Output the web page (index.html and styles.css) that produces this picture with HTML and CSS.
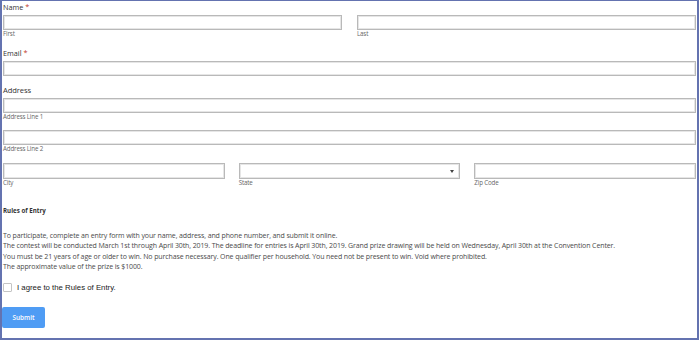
FILE: index.html
```html
<!DOCTYPE html>
<html lang="en">

<head>
    <meta charset="UTF-8">
    <meta name="viewport" content="width=device-width, initial-scale=1.0">
    <title>Contest Entry</title>
    <link rel="stylesheet" href="styles.css">
</head>

<body>
    <main class="frame">
        <form class="entry-form">
            <div class="field name-field">
                <label class="label">Name <span class="req">*</span></label>
                <div class="cols two">
                    <div class="sub">
                        <input type="text" class="input">
                        <span class="hint">First</span>
                    </div>
                    <div class="sub">
                        <input type="text" class="input">
                        <span class="hint">Last</span>
                    </div>
                </div>
            </div>

            <div class="field email-field">
                <label class="label">Email <span class="req">*</span></label>
                <input type="text" class="input">
            </div>

            <div class="field address-field">
                <label class="label big">Address</label>
                <input type="text" class="input">
                <span class="hint">Address Line 1</span>
                <input type="text" class="input line2">
                <span class="hint">Address Line 2</span>
                <div class="cols three">
                    <div class="sub">
                        <input type="text" class="input tall">
                        <span class="hint">City</span>
                    </div>
                    <div class="sub">
                        <div class="select-box input tall"><span class="arrow"></span></div>
                        <span class="hint">State</span>
                    </div>
                    <div class="sub">
                        <input type="text" class="input tall">
                        <span class="hint">Zip Code</span>
                    </div>
                </div>
            </div>

            <div class="rules">
                <h3 class="rules-title">Rules of Entry</h3>
                <p class="rules-text">
                    To participate, complete an entry form with your name, address, and phone number, and submit it online.<br>
                    The contest will be conducted March 1st through April 30th, 2019. The deadline for entries is April 30th, 2019. Grand prize drawing will be held on Wednesday, April 30th at the Convention Center.<br>
                    You must be 21 years of age or older to win. No purchase necessary. One qualifier per household. You need not be present to win. Void where prohibited.<br>
                    The approximate value of the prize is $1000.
                </p>
            </div>

            <label class="agree">
                <span class="box"></span>
                I agree to the Rules of Entry.
            </label>

            <button type="button" class="submit">Submit</button>
        </form>
    </main>
</body>

</html>
```

FILE: styles.css
```css
* {
    margin: 0;
    padding: 0;
    box-sizing: border-box;
    font-family: 'Open Sans', 'Liberation Sans', sans-serif;
}

:root {
    --frame-color: #6473b0;
    --input-border: #b9b9b9;
    --text: #333;
}

body {
    background-color: #fff;
}

.frame {
    width: 699px;
    height: 340px;
    border-top: 1px solid var(--frame-color);
    border-left: 2px solid var(--frame-color);
    border-right: 2px solid var(--frame-color);
    border-bottom: 2px solid var(--frame-color);
    overflow: hidden;
}

.entry-form {
    display: flex;
    flex-direction: column;
    padding: 1px 1px 0 1px;
}

.field {
    display: flex;
    flex-direction: column;
}

.label {
    font-size: 7.3px;
    line-height: 10px;
    height: 10px;
    color: var(--text);
}

.label.big {
    font-size: 7.6px;
    letter-spacing: -0.1px;
}

.req {
    color: #c0392b;
}

.input {
    display: block;
    width: 100%;
    height: 15px;
    border: 1px solid var(--input-border);
    box-shadow: inset 0 0 0 1px #e6e6e6;
    background-color: #fff;
    margin-top: 3px;
}

.input.tall {
    height: 16px;
    margin-top: 0;
}

.input.line2 {
    margin-top: 9px;
}

.hint {
    display: block;
    font-size: 6.2px;
    letter-spacing: -0.15px;
    line-height: 8px;
    height: 8px;
    color: #666;
}

.cols {
    display: grid;
}

.cols.two {
    grid-template-columns: 1fr 1fr;
    gap: 15px;
}

.cols.three {
    grid-template-columns: 1fr 1fr 1fr;
    gap: 14px;
    margin-top: 10px;
}

.email-field {
    margin-top: 10px;
}

.address-field {
    margin-top: 9px;
}

.select-box {
    position: relative;
}

.arrow {
    position: absolute;
    right: 5px;
    top: 6px;
    width: 0;
    height: 0;
    border-left: 2px solid transparent;
    border-right: 2px solid transparent;
    border-top: 3px solid #444;
}

.rules {
    margin-top: 19px;
}

.rules-title {
    font-size: 6.2px;
    font-weight: bold;
    line-height: 10px;
    color: var(--text);
}

.rules-text {
    margin-top: 15px;
    font-size: 7px;
    letter-spacing: -0.11px;
    line-height: 10.4px;
    color: #4a4a4a;
}

.agree {
    display: flex;
    align-items: center;
    gap: 5px;
    margin-top: 10px;
    height: 10px;
    font-family: 'Liberation Sans', Arial, sans-serif;
    font-size: 7.8px;
    color: #222;
}

.box {
    width: 9px;
    height: 9px;
    border: 1px solid #c4c4c4;
    border-radius: 1px;
    background-color: #fff;
}

.submit {
    margin-top: 14px;
    margin-left: -1px;
    width: 43px;
    height: 21px;
    border: none;
    border-radius: 2px;
    background-color: #4f9cf4;
    color: #fff;
    font-size: 6.4px;
    font-weight: 600;
    cursor: pointer;
}
```
